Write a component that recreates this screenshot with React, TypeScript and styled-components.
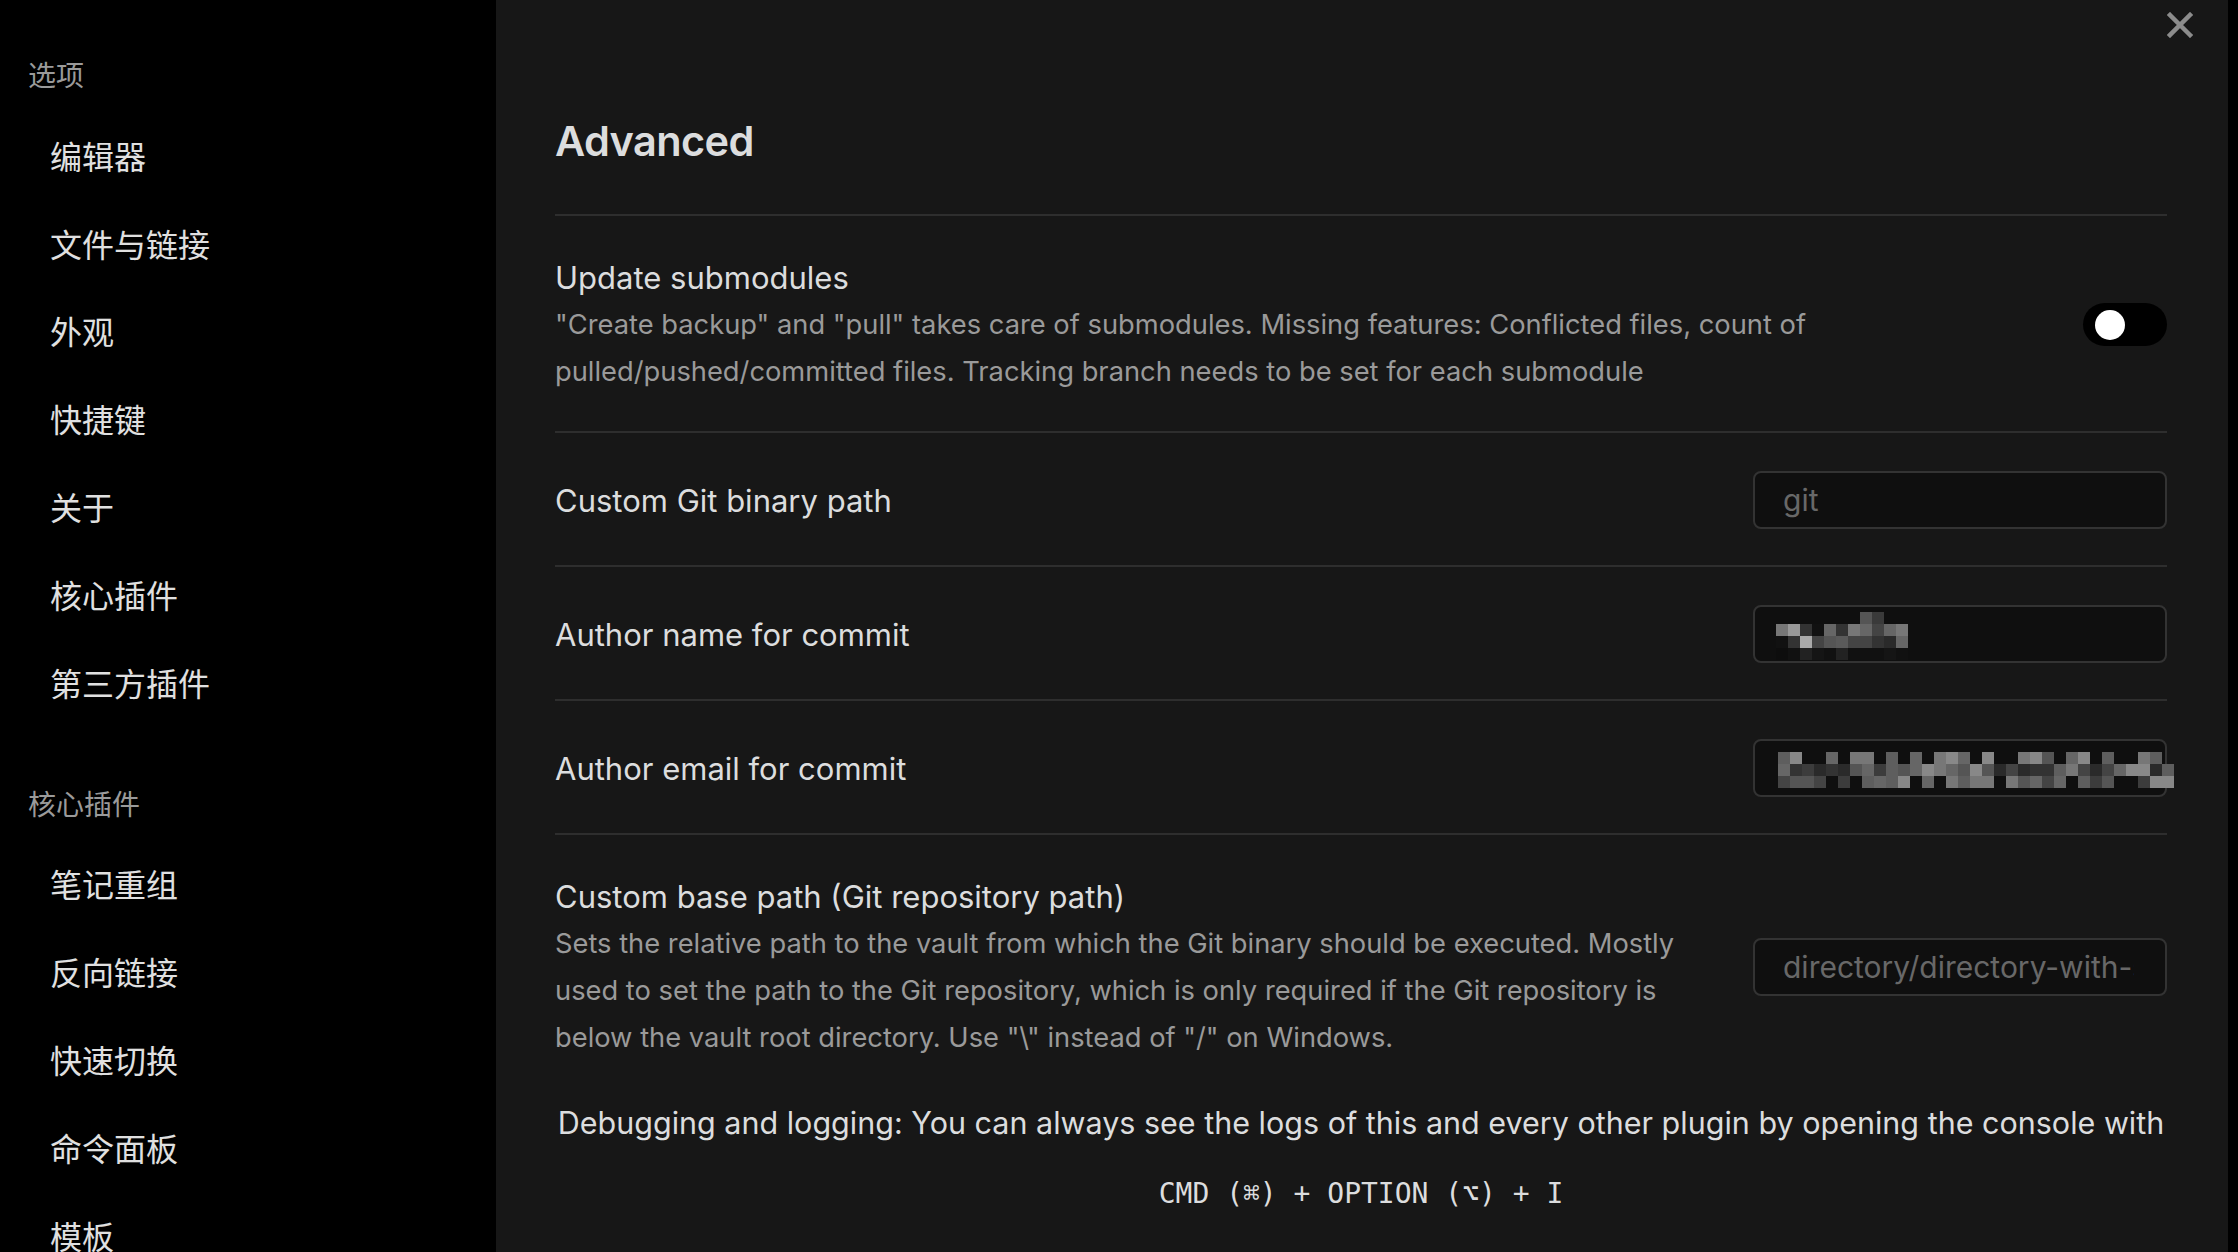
import * as React from 'react';
import styled, { createGlobalStyle } from 'styled-components';

const GlobalStyle = createGlobalStyle`
  html, body {
    margin: 0;
    padding: 0;
    background: #000;
    overflow: hidden;
  }
  * {
    box-sizing: border-box;
  }
`;

const UI_FONT = `Inter, "Noto Sans", "Noto Sans CJK SC", sans-serif`;
const CJK_FONT = `"Noto Sans CJK SC", "Noto Sans", sans-serif`;

interface NavGroup {
  title: string;
  items: string[];
}

const navGroups: NavGroup[] = [
  { title: '选项', items: ['编辑器', '文件与链接', '外观', '快捷键', '关于', '核心插件', '第三方插件'] },
  { title: '核心插件', items: ['笔记重组', '反向链接', '快速切换', '命令面板', '模板'] }
];

// deterministic grey values for the redacted fields
const shade = (seed: number) => {
  const x = Math.sin(seed * 12.9898) * 43758.5453;
  return x - Math.floor(x);
};

const greys = ['#2a2a2a', '#333', '#3c3c3c', '#444', '#555', '#5e5e5e', '#666', '#777', '#888'];

const nameCells: string[][] = [
  ['', '', '', '', '', '', '', '#555', '#3a3a3a', '', ''],
  ['#777', '#999', '#333', '#111', '#666', '#333', '#777', '#666', '#444', '#666', '#777'],
  ['#111', '#333', '#aaa', '#444', '#555', '#5a5a5a', '#444', '#444', '#333', '#2a2a2a', '#666'],
  ['#0d0d0d', '#111', '#222', '#151515', '#111', '#222', '#111', '#111', '#111', '#151515', '#111']
];

const emailCells: string[][] = [0, 1, 2].map(r =>
  Array.from({ length: 33 }, (_, c) => {
    const v = shade(r * 41 + c * 7 + 3);
    if (r === 0 && v < 0.5) return '';
    if (r === 2 && v < 0.25) return '';
    return greys[Math.floor(v * greys.length)];
  })
);

const Mosaic = ({ cells, size }: { cells: string[][]; size: number }) => {
  const cols = cells[0].length;
  return (
    <MosaicSvg width={cols * size} height={cells.length * size} viewBox={`0 0 ${cols * size} ${cells.length * size}`}>
      {cells.map((row, r) =>
        row.map((fill, c) =>
          fill ? <rect key={`${r}-${c}`} x={c * size} y={r * size} width={size} height={size} fill={fill} /> : null
        )
      )}
    </MosaicSvg>
  );
};

const CloseIcon = () => (
  <svg width="26" height="26" viewBox="0 0 26 26">
    <path d="M3 3 L23 23 M23 3 L3 23" stroke="#8c8c8c" strokeWidth="4.5" strokeLinecap="square" />
  </svg>
);

export default function App() {
  return (
    <Layout>
      <GlobalStyle />
      <Sidebar>
        {navGroups.map(group => (
          <Group key={group.title}>
            <GroupTitle>{group.title}</GroupTitle>
            {group.items.map(item => (
              <NavItem key={item}>{item}</NavItem>
            ))}
          </Group>
        ))}
      </Sidebar>

      <Pane>
        <CloseButton>
          <CloseIcon />
        </CloseButton>

        <Heading>Advanced</Heading>

        <SettingItem>
          <Info>
            <Name>Update submodules</Name>
            <Description>
              "Create backup" and "pull" takes care of submodules. Missing features: Conflicted files, count of
              pulled/pushed/committed files. Tracking branch needs to be set for each submodule
            </Description>
          </Info>
          <Control>
            <Toggle>
              <Knob />
            </Toggle>
          </Control>
        </SettingItem>

        <SettingItem>
          <Info>
            <Name>Custom Git binary path</Name>
          </Info>
          <Control>
            <TextField placeholder="git" />
          </Control>
        </SettingItem>

        <SettingItem>
          <Info>
            <Name>Author name for commit</Name>
          </Info>
          <Control>
            <FieldBox>
              <NameMask>
                <Mosaic cells={nameCells} size={12} />
              </NameMask>
            </FieldBox>
          </Control>
        </SettingItem>

        <SettingItem>
          <Info>
            <Name>Author email for commit</Name>
          </Info>
          <Control>
            <FieldBox>
              <EmailMask>
                <Mosaic cells={emailCells} size={12} />
              </EmailMask>
            </FieldBox>
          </Control>
        </SettingItem>

        <SettingItem>
          <Info>
            <Name>Custom base path (Git repository path)</Name>
            <Description>
              Sets the relative path to the vault from which the Git binary should be executed. Mostly used to set the
              path to the Git repository, which is only required if the Git repository is below the vault root
              directory. Use "\" instead of "/" on Windows.
            </Description>
          </Info>
          <Control>
            <TextField $padRight={31} placeholder="directory/directory-with-spaces" />
          </Control>
        </SettingItem>

        <Note>
          Debugging and logging: You can always see the logs of this and every other plugin by opening the console with
        </Note>
        <Shortcut>CMD (⌘) + OPTION (⌥) + I</Shortcut>
      </Pane>

      <EdgeStrip />
    </Layout>
  );
}

const Layout = styled.div`
  display: flex;
  width: 100vw;
  height: 100vh;
  overflow: hidden;
`;

const Sidebar = styled.nav`
  width: 496px;
  flex-shrink: 0;
  background: #000;
  padding-top: 54px;
  font-family: ${CJK_FONT};
`;

const Group = styled.div`
  & + & {
    margin-top: 57px;
  }
`;

const GroupTitle = styled.div`
  padding-left: 28px;
  font-size: 28px;
  line-height: 40px;
  color: #9a9a9a;
  margin-bottom: 17px;
`;

const NavItem = styled.div`
  height: 87.8px;
  display: flex;
  align-items: center;
  padding-left: 50px;
  font-size: 32px;
  color: #e0e0e0;
`;

const Pane = styled.main`
  position: relative;
  flex: 1;
  background: #171717;
  padding: 115px 61px 0 59px;
  font-family: ${UI_FONT};
  color: #dcddde;
`;

const CloseButton = styled.div`
  position: absolute;
  top: 12px;
  right: 35px;
  width: 26px;
  height: 26px;
  display: flex;
`;

const Heading = styled.h2`
  margin: 0 0 47px;
  font-size: 41.5px;
  line-height: 52px;
  font-weight: 600;
  letter-spacing: -0.6px;
  color: #dcddde;
`;

const SettingItem = styled.div`
  display: flex;
  align-items: center;
  padding: 38px 0 36px;
  border-top: 2px solid #2e2e2e;
`;

const Info = styled.div`
  flex: 1 1 auto;
  margin-right: 34px;
`;

const Name = styled.div`
  font-size: 31px;
  line-height: 47px;
  color: #dcddde;
`;

const Description = styled.div`
  font-size: 27.3px;
  line-height: 47px;
  color: #9a9a9a;
`;

const Control = styled.div`
  flex: 0 0 auto;
  display: flex;
  justify-content: flex-end;
`;

const Toggle = styled.div`
  width: 84px;
  height: 43px;
  border-radius: 22px;
  background: #000;
  display: flex;
  align-items: center;
  padding-left: 12px;
`;

const Knob = styled.div`
  width: 30px;
  height: 30px;
  border-radius: 50%;
  background: #fff;
`;

const TextField = styled.input<{ $padRight?: number }>`
  width: 414px;
  height: 58px;
  padding: 0 ${p => p.$padRight ?? 28}px 0 28px;
  border: 2px solid #333;
  border-radius: 8px;
  background: #0f0f0f;
  font-family: ${UI_FONT};
  font-size: 30px;
  color: #dcddde;
  outline: none;

  &::placeholder {
    color: #686868;
  }
`;

const FieldBox = styled.div`
  position: relative;
  width: 414px;
  height: 58px;
  border: 2px solid #333;
  border-radius: 8px;
  background: #0f0f0f;
`;

const MosaicSvg = styled.svg`
  display: block;
`;

const NameMask = styled.div`
  position: absolute;
  left: 21px;
  top: 5px;
`;

const EmailMask = styled.div`
  position: absolute;
  left: 23px;
  top: 11px;
`;

const Note = styled.p`
  margin: 0;
  padding-top: 4px;
  text-align: center;
  font-size: 30.5px;
  line-height: 44px;
  color: #dcddde;
`;

const Shortcut = styled.div`
  margin-top: 29px;
  text-align: center;
  font-family: "DejaVu Sans Mono", "Liberation Mono", monospace;
  font-size: 28px;
  line-height: 40px;
  color: #dcddde;
`;

const EdgeStrip = styled.div`
  width: 10px;
  flex-shrink: 0;
  background: #000;
`;
